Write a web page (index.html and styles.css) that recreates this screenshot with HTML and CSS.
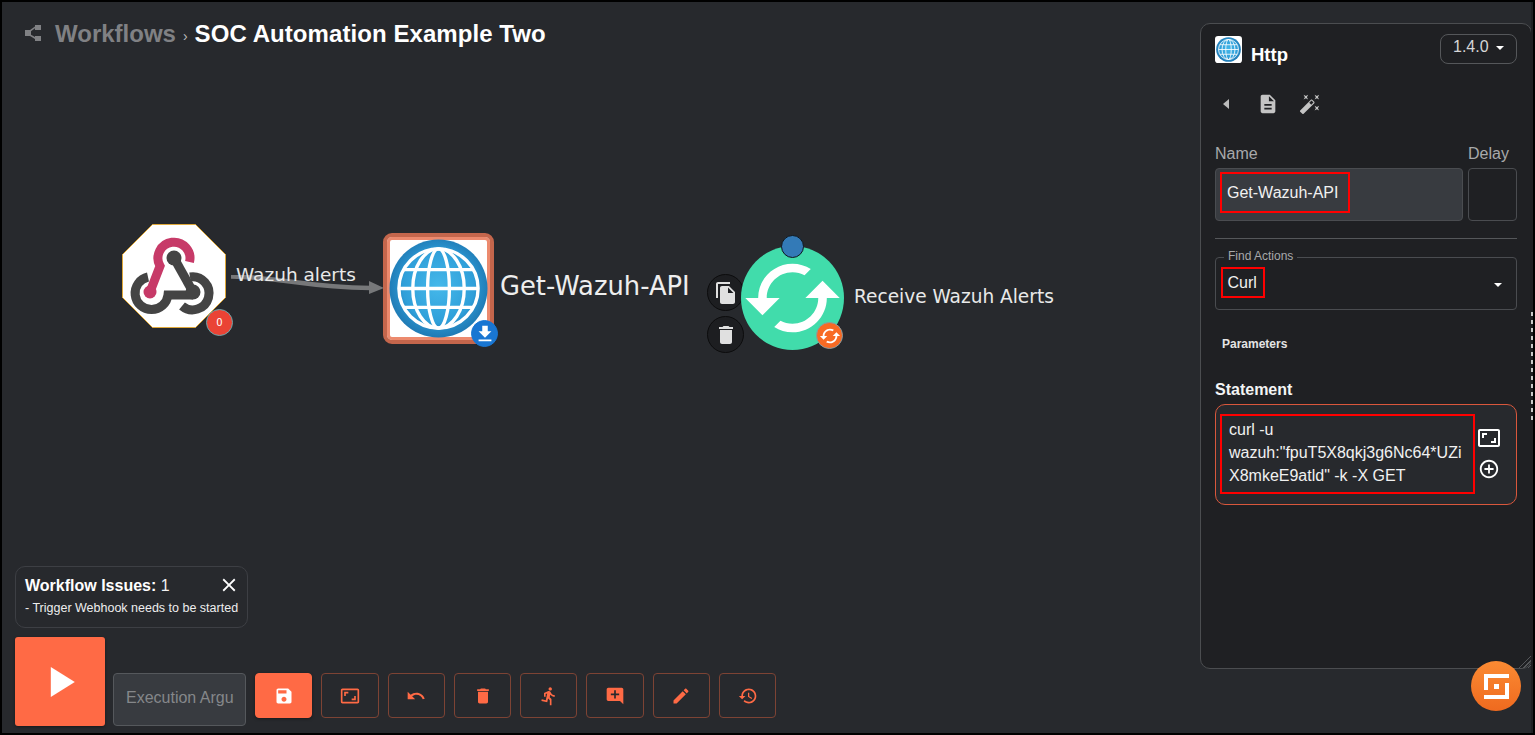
FILE: index.html
```html
<!DOCTYPE html>
<html lang="en">
<head>
<meta charset="utf-8">
<title>SOC Automation Example Two</title>
<link rel="stylesheet" href="styles.css">
</head>
<body>
<svg class="defs" width="0" height="0" aria-hidden="true">
  <defs>
    <radialGradient id="globeFill" cx="50%" cy="48%" r="52%">
      <stop offset="0" stop-color="#45b8ea"/>
      <stop offset="0.7" stop-color="#2f9fd9"/>
      <stop offset="0.82" stop-color="#268bc6"/>
      <stop offset="1" stop-color="#1f7ab4"/>
    </radialGradient>
    <symbol id="globe" viewBox="0 0 100 100">
      <circle cx="50" cy="50" r="49.5" fill="url(#globeFill)"/>
      <g fill="none" stroke="#fff" stroke-width="3.400">
        <circle cx="50" cy="50" r="40"/>
        <ellipse cx="50" cy="50" rx="11" ry="40"/>
        <ellipse cx="50" cy="50" rx="26" ry="40"/>
        <path d="M10 50H90M15 31H85M15 69H85"/>
      </g>
    </symbol>
  </defs>
</svg>
<main class="app">
  <header class="crumbs">
    <svg class="crumb-icon" viewBox="0 0 18 18"><path d="M11 1h6v5h-6V4.200L7 7.200V10.800L11 13V12h6v5h-6v-2l-5-3H1V6h5l5-3.500z" fill="#808184"/></svg>
    <span class="crumb-root">Workflows</span>
    <span class="crumb-sep">›</span>
    <span class="crumb-title">SOC Automation Example Two</span>
  </header>

  <section class="canvas">
    <svg class="edge" width="160" height="30" viewBox="0 0 160 30">
      <path d="M0 1.500C60 3 70 12 140 13" fill="none" stroke="#77787a" stroke-width="4.500"/>
      <path d="M138 6L153 13 138 19z" fill="#77787a"/>
    </svg>
    <span class="edge-label">Wazuh alerts</span>

    <div class="node-hook">
      <svg viewBox="0 0 104 104" width="104" height="104">
        <path d="M30.500 .5H73.500L103.500 30.500V73.500L73.500 103.500H30.500L.5 73.500V30.500z" fill="#fff" stroke="#e0a93a"/>
        <g fill="none" stroke-width="9">
          <path d="M26 53A16.500 16.500 0 1 0 46 71H71" stroke="#444"/>
          <path d="M68 53A16.500 16.500 0 1 1 60 82" stroke="#444"/>
          <path d="M52 34L71 68" stroke="#444"/>
          <path d="M67.500 38A16 16 0 1 0 38 42L28 68" stroke="#c73a68"/>
        </g>
        <circle cx="28" cy="68" r="6.500" fill="#c73a68"/>
        <circle cx="52" cy="34" r="7.500" fill="#444"/>
        <circle cx="71" cy="68" r="7.500" fill="#444"/>
      </svg>
      <span class="badge badge-red">0</span>
    </div>

    <div class="node-http">
      <svg class="http-globe" viewBox="0 0 100 100"><use href="#globe"/></svg>
      <span class="badge badge-blue">
        <svg viewBox="0 0 24 24" width="22" height="22"><path d="M19 9h-4V3H9v6H5l7 7 7-7zM5 18v2h14v-2H5z" fill="#fff"/></svg>
      </span>
    </div>
    <span class="label-http">Get-Wazuh-API</span>

    <button class="float-btn float-copy" type="button" aria-label="Copy">
      <svg viewBox="0 0 24 24" width="24" height="24"><path d="M16 1H4c-1.100 0-2 .9-2 2v14h2V3h12V1zm-1 4l6 6v10c0 1.100-.9 2-2 2H7.990C6.890 23 6 22.100 6 21l.01-14c0-1.100.89-2 1.990-2h7zm-1 7h5.500L14 6.500V12z" fill="#e0e0e0"/></svg>
    </button>
    <button class="float-btn float-del" type="button" aria-label="Delete">
      <svg viewBox="0 0 24 24" width="24" height="24"><path d="M6 19c0 1.100.9 2 2 2h8c1.100 0 2-.9 2-2V7H6v12zM19 4h-3.500l-1-1h-5l-1 1H5v2h14V4z" fill="#e0e0e0"/></svg>
    </button>

    <div class="node-trigger">
      <svg viewBox="0 0 24 24" width="106" height="106"><path d="M19 8l-4 4h3c0 3.310-2.690 6-6 6-1.010 0-1.970-.25-2.800-.7l-1.460 1.460C8.970 19.540 10.430 20 12 20c4.420 0 8-3.580 8-8h3l-4-4zM6 12c0-3.310 2.690-6 6-6 1.010 0 1.970.25 2.800.7l1.460-1.460C15.030 4.460 13.570 4 12 4c-4.420 0-8 3.580-8 8H1l4 4 4-4H6z" fill="#fff"/></svg>
      <span class="dot-top"></span>
      <span class="badge badge-orange">
        <svg viewBox="0 0 24 24" width="22" height="22"><path d="M19 8l-4 4h3c0 3.310-2.690 6-6 6-1.010 0-1.970-.25-2.800-.7l-1.460 1.460C8.970 19.540 10.430 20 12 20c4.420 0 8-3.580 8-8h3l-4-4zM6 12c0-3.310 2.690-6 6-6 1.010 0 1.970.25 2.800.7l1.460-1.460C15.030 4.460 13.570 4 12 4c-4.420 0-8 3.580-8 8H1l4 4 4-4H6z" fill="#fff"/></svg>
      </span>
    </div>
    <span class="label-trigger">Receive Wazuh Alerts</span>
  </section>

  <section class="dock">
    <div class="issues">
      <div class="issues-head">
        <span><strong>Workflow Issues:</strong> 1</span>
        <svg viewBox="0 0 24 24" width="22" height="22"><path d="M19 6.410L17.590 5 12 10.590 6.410 5 5 6.410 10.590 12 5 17.590 6.410 19 12 13.410 17.590 19 19 17.590 13.410 12z" fill="#fff"/></svg>
      </div>
      <div class="issues-text">- Trigger Webhook needs to be started</div>
    </div>
    <div class="toolbar">
      <button class="play" type="button" aria-label="Run">
        <svg viewBox="0 0 24 24" width="48" height="48"><path d="M7.400 4.500v15l12-7.500z" fill="#fff"/></svg>
      </button>
      <div class="exec">Execution Argu</div>
      <div class="tools">
        <button class="tool tool-solid" type="button" aria-label="Save"><svg viewBox="0 0 24 24"><path d="M17 3H5c-1.110 0-2 .9-2 2v14c0 1.100.89 2 2 2h14c1.100 0 2-.9 2-2V7l-4-4zm-5 16c-1.660 0-3-1.340-3-3s1.340-3 3-3 3 1.340 3 3-1.340 3-3 3zm3-10H5V5h10v4z"/></svg></button>
        <button class="tool" type="button" aria-label="Fit"><svg viewBox="0 0 24 24"><path d="M19 12h-2v3h-3v2h5v-5zM7 9h3V7H5v5h2V9zm14-6H3c-1.100 0-2 .9-2 2v14c0 1.100.9 2 2 2h18c1.100 0 2-.9 2-2V5c0-1.100-.9-2-2-2zm0 16.010H3V4.990h18v14.020z"/></svg></button>
        <button class="tool" type="button" aria-label="Undo"><svg viewBox="0 0 24 24"><path d="M12.500 8c-2.650 0-5.050.99-6.900 2.600L2 7v9h9l-3.620-3.620c1.390-1.160 3.160-1.880 5.120-1.880 3.540 0 6.550 2.310 7.600 5.500l2.370-.78C21.080 11.030 17.150 8 12.500 8z"/></svg></button>
        <button class="tool" type="button" aria-label="Delete"><svg viewBox="0 0 24 24"><path d="M6 19c0 1.100.9 2 2 2h8c1.100 0 2-.9 2-2V7H6v12zM19 4h-3.500l-1-1h-5l-1 1H5v2h14V4z"/></svg></button>
        <button class="tool" type="button" aria-label="Run"><svg viewBox="0 0 24 24"><path d="M13.490 5.480c1.100 0 2-.9 2-2s-.9-2-2-2-2 .9-2 2 .9 2 2 2zm-3.600 13.900l1-4.400 2.100 2v6h2v-7.500l-2.100-2 .6-3c1.300 1.500 3.300 2.500 5.500 2.500v-2c-1.900 0-3.500-1-4.300-2.400l-1-1.600c-.4-.6-1-1-1.700-1-.3 0-.5.1-.8.1l-5.200 2.200v4.700h2v-3.400l1.800-.7-1.600 8.100-4.900-1-.4 2 7 1.400z"/></svg></button>
        <button class="tool" type="button" aria-label="Add comment"><svg viewBox="0 0 24 24"><path d="M21.990 4c0-1.100-.89-2-1.990-2H4c-1.100 0-2 .9-2 2v12c0 1.100.9 2 2 2h14l4 4-.01-18zM17 11h-4v4h-2v-4H7V9h4V5h2v4h4v2z"/></svg></button>
        <button class="tool" type="button" aria-label="Edit"><svg viewBox="0 0 24 24"><path d="M3 17.250V21h3.750L17.810 9.940l-3.750-3.750L3 17.250zM20.710 7.040c.39-.39.39-1.020 0-1.410l-2.340-2.340c-.39-.39-1.020-.39-1.410 0l-1.830 1.830 3.750 3.750 1.830-1.830z"/></svg></button>
        <button class="tool" type="button" aria-label="History"><svg viewBox="0 0 24 24"><path d="M13 3c-4.970 0-9 4.030-9 9H1l3.890 3.890.07.14L9 12H6c0-3.870 3.130-7 7-7s7 3.130 7 7-3.130 7-7 7c-1.930 0-3.680-.79-4.940-2.060l-1.420 1.420C8.270 19.990 10.510 21 13 21c4.970 0 9-4.030 9-9s-4.030-9-9-9zm-1 5v5l4.280 2.540.72-1.210-3.500-2.080V8H12z"/></svg></button>
      </div>
    </div>
  </section>

  <aside class="panel">
    <div class="panel-head">
      <div class="app-title">
        <svg class="app-icon" viewBox="0 0 26 26"><rect width="26" height="26" rx="3" fill="#fff"/><svg x="1" y="1" width="24" height="24" viewBox="0 0 100 100"><use href="#globe"/></svg></svg>
        <span>Http</span>
      </div>
      <div class="version">1.4.0 <span class="caret"></span></div>
    </div>
    <div class="panel-icons">
      <svg class="pi-back" viewBox="0 0 6 10" width="6" height="10"><path d="M6 0v10L0 5z" fill="#bbb"/></svg>
      <svg viewBox="0 0 24 24" width="22" height="22"><path d="M14 2H6c-1.100 0-1.990.9-1.990 2L4 20c0 1.100.89 2 1.990 2H18c1.100 0 2-.9 2-2V8l-6-6zm2 16H8v-2h8v2zm0-4H8v-2h8v2zm-3-5V3.500L18.500 9H13z" fill="#c4c4c4"/></svg>
      <svg viewBox="0 0 24 24" width="22" height="22"><path d="M7.500 5.600L10 7 8.600 4.500 10 2 7.500 3.400 5 2l1.400 2.500L5 7zm12 9.800L17 14l1.400 2.500L17 19l2.500-1.400L22 19l-1.400-2.500L22 14zM22 2l-2.500 1.400L17 2l1.400 2.500L17 7l2.500-1.400L22 7l-1.400-2.500zm-7.630 5.290c-.39-.39-1.020-.39-1.410 0L1.290 18.960c-.39.39-.39 1.020 0 1.410l2.340 2.340c.39.39 1.020.39 1.410 0L16.700 11.050c.39-.39.39-1.020 0-1.410l-2.330-2.350zm-1.030 5.490l-2.120-2.120 2.440-2.440 2.120 2.120-2.440 2.440z" fill="#c4c4c4"/></svg>
    </div>
    <div class="fields">
      <div class="field-name">
        <label class="label">Name</label>
        <div class="input-name"><span class="mark mark-name">Get-Wazuh-API</span></div>
      </div>
      <div class="field-delay">
        <label class="label">Delay</label>
        <div class="input-delay"></div>
      </div>
    </div>
    <hr class="rule">
    <div class="find">
      <span class="find-legend">Find Actions</span>
      <span class="mark mark-curl">Curl</span>
      <span class="caret find-caret"></span>
    </div>
    <div class="params">Parameters</div>
    <div class="statement-label">Statement</div>
    <div class="statement">
      <div class="mark-statement">curl -u wazuh:"fpuT5X8qkj3g6Nc64*UZiX8mkeE9atld" -k -X GET</div>
      <div class="statement-icons">
        <svg viewBox="0 0 24 24" width="24" height="24"><path d="M19 12h-2v3h-3v2h5v-5zM7 9h3V7H5v5h2V9zm14-6H3c-1.100 0-2 .9-2 2v14c0 1.100.9 2 2 2h18c1.100 0 2-.9 2-2V5c0-1.100-.9-2-2-2zm0 16.010H3V4.990h18v14.020z" fill="#fff"/></svg>
        <svg viewBox="0 0 24 24" width="22" height="22"><path d="M13 7h-2v4H7v2h4v4h2v-4h4v-2h-4V7zm-1-5C6.480 2 2 6.480 2 12s4.480 10 10 10 10-4.480 10-10S17.520 2 12 2zm0 18c-4.410 0-8-3.590-8-8s3.590-8 8-8 8 3.590 8 8-3.590 8-8 8z" fill="#fff"/></svg>
      </div>
    </div>
    <span class="grip"></span>
  </aside>

  <div class="help">
    <svg viewBox="0 0 25 25" width="25" height="25"><path d="M0 0H25V4H4V16H0zM25 25H0V21H21V9H25zM10 10H15V15H10z" fill="#fff"/></svg>
  </div>
  <span class="edge-strip"></span>
</main>
</body>
</html>
```
FILE: styles.css
```css
* { box-sizing: border-box; }
html, body { margin: 0; height: 100%; overflow: hidden; background: #000; }
body { padding: 2px; font-family: "Liberation Sans", Arial, sans-serif; color: #fff; }
.defs { position: absolute; }
button { font: inherit; padding: 0; cursor: pointer; }

.app {
  position: relative;
  width: 1531px;
  height: 731px;
  background: #27292d;
  overflow: hidden;
}
.edge-strip {
  position: absolute;
  right: 0;
  top: 0;
  bottom: 0;
  width: 2px;
  background: #1f2023;
}
.edge-strip::after {
  content: "";
  position: absolute;
  left: 0;
  top: 310px;
  width: 2px;
  height: 110px;
  background: repeating-linear-gradient(#c9c9c9 0 4px, transparent 4px 8px);
}

/* breadcrumb */
.crumbs {
  position: absolute;
  left: 22px;
  top: 18px;
  display: flex;
  align-items: center;
  height: 28px;
  font-size: 24px;
  font-weight: 700;
  white-space: nowrap;
}
.crumb-icon { width: 18px; height: 18px; margin-right: 13px; margin-top: -3px; }
.crumb-root { color: #808184; }
.crumb-sep { font-size: 14px; font-weight: 400; color: #bbb; margin: 3px 7px 0; }
.crumb-title { color: #fff; letter-spacing: .07px; }

/* free canvas */
.canvas { position: absolute; inset: 0; font-family: "DejaVu Sans", sans-serif; }
.edge { position: absolute; left: 229px; top: 273px; }
.edge-label { position: absolute; left: 234px; top: 261px; font-size: 18.500px; line-height: 24px; color: #e9e9e9; white-space: nowrap; }
.node-hook { position: absolute; left: 120px; top: 222px; width: 104px; height: 104px; }
.node-hook > svg { display: block; }
.badge {
  position: absolute;
  width: 27px;
  height: 27px;
  border-radius: 50%;
  display: flex;
  align-items: center;
  justify-content: center;
  border: 1px solid #6aa6ab;
}
.badge-red { left: 84px; top: 85px; background: #ea4335; font-size: 10px; color: #fff; }
.badge-blue { left: 84px; top: 83px; background: #1976d2; border-color: #1976d2; }
.badge-orange { left: 75px; top: 76px; background: #f86a24; border-color: #8a9ca0; }
.node-http {
  position: absolute;
  left: 381px;
  top: 231px;
  width: 111px;
  height: 111px;
  border: 4px solid #c4664c;
  border-radius: 9px;
  background: #fff;
  box-shadow: inset 0 0 0 3px #ec8a6e;
}
.http-globe { position: absolute; left: 2px; top: 2px; width: 99px; height: 99px; }
.label-http { position: absolute; left: 498px; top: 269px; font-size: 25.800px; line-height: 30px; color: #eee; white-space: nowrap; }
.float-btn {
  position: absolute;
  left: 705px;
  width: 37px;
  height: 37px;
  border-radius: 50%;
  border: 1px solid #0c0c0d;
  background: #1d1e21;
  display: flex;
  align-items: center;
  justify-content: center;
}
.float-copy { top: 272px; }
.float-del { top: 314px; }
.node-trigger {
  position: absolute;
  left: 739px;
  top: 244px;
  width: 103px;
  height: 104px;
  border-radius: 50%;
  background: #41dcab;
  display: flex;
  align-items: center;
  justify-content: center;
}
.dot-top {
  position: absolute;
  left: 40px;
  top: -11px;
  width: 23px;
  height: 23px;
  border-radius: 50%;
  background: #337ab7;
  border: 1px solid #10171d;
}
.label-trigger { position: absolute; left: 852px; top: 283px; font-size: 18.550px; line-height: 24px; color: #e9e9e9; white-space: nowrap; }

/* bottom dock */
.dock { position: absolute; left: 13px; top: 564px; display: flex; flex-direction: column; gap: 9px; }
.issues {
  width: 233px;
  height: 62px;
  padding: 10px 7px 0 9px;
  border: 1px solid #3d3f44;
  border-radius: 10px;
}
.issues-head { display: flex; justify-content: space-between; align-items: center; height: 18px; font-size: 16px; line-height: 18px; color: #f2f2f2; }
.issues-head svg { margin-top: -2px; }
.issues-head strong { color: #fff; }
.issues-text { margin-top: 6px; font-size: 12.500px; line-height: 15px; color: #eee; white-space: nowrap; }
.toolbar { display: flex; align-items: flex-end; width: 770px; }
.play {
  width: 90px;
  height: 89px;
  border: 0;
  border-radius: 3px;
  background: #ff6a45;
  display: flex;
  align-items: center;
  justify-content: center;
  box-shadow: 0 1px 3px rgba(0,0,0,.4);
}
.exec {
  width: 133px;
  height: 53px;
  margin-left: 8px;
  padding: 0 12px;
  line-height: 47px;
  font-size: 16px;
  color: #85878a;
  background: #383b40;
  border: 1px solid #55585c;
  border-radius: 4px;
  overflow: hidden;
  white-space: nowrap;
}
.tools { display: flex; gap: 9px; margin-left: 9px; margin-bottom: 8px; }
.tool {
  width: 57.300px;
  height: 45px;
  background: transparent;
  border: 1px solid #7d4334;
  border-radius: 4px;
  display: flex;
  align-items: center;
  justify-content: center;
}
.tool svg { width: 20px; height: 20px; fill: #ff6a45; }
.tool-solid { background: #ff6a45; border-color: #ff6a45; box-shadow: 0 1px 3px rgba(0,0,0,.4); }
.tool-solid svg { fill: #fff; }

/* side panel */
.panel {
  position: absolute;
  left: 1198px;
  top: 21px;
  width: 332px;
  height: 646px;
  padding: 11px 14px 0;
  background: #1f2023;
  border: 1px solid #4b4d50;
  border-radius: 10px;
}
.panel-head { display: flex; justify-content: space-between; align-items: flex-start; }
.app-title { display: flex; align-items: flex-start; gap: 9px; font-size: 18.500px; font-weight: 700; line-height: 24px; }
.app-title span { margin-top: 8px; }
.app-icon { width: 27px; height: 27px; margin-top: 1px; }
.version {
  width: 77px;
  height: 30px;
  margin-top: -1px;
  padding-left: 12px;
  font-size: 16px;
  line-height: 24px;
  color: #d6d6d6;
  border: 1px solid #55575a;
  border-radius: 8px;
}
.caret {
  display: inline-block;
  width: 0;
  height: 0;
  margin-left: 3px;
  vertical-align: 2px;
  border-left: 4.500px solid transparent;
  border-right: 4.500px solid transparent;
  border-top: 4.500px solid #fff;
}
.panel-icons { display: flex; align-items: center; height: 24px; margin-top: 25px; padding-left: 8px; }
.panel-icons svg:nth-child(2) { margin-left: 28px; }
.panel-icons svg:nth-child(3) { margin-left: 20px; }
.fields { display: flex; gap: 5px; margin-top: 28px; }
.field-name { width: 248px; }
.field-delay { width: 49px; }
.label { display: block; font-size: 16px; line-height: 20px; color: #a8a9ab; height: 24px; }
.input-name, .input-delay { height: 53px; border: 1px solid #4a4c50; border-radius: 4px; }
.input-name { background: #383b40; padding: 3px 0 0 4px; }
.mark { display: block; border: 2px solid #f00; color: #f1f1f1; font-size: 16px; white-space: nowrap; }
.mark-name { width: 130px; height: 41px; padding-left: 5px; line-height: 37px; }
.rule { height: 1px; margin: 17px 0 0; border: 0; background: #55575a; }
.find {
  position: relative;
  height: 53px;
  margin-top: 18px;
  padding: 9px 0 0 5px;
  border: 1px solid #4a4c50;
  border-radius: 4px;
}
.find-legend {
  position: absolute;
  left: 8px;
  top: -9px;
  padding: 0 4px;
  font-size: 12px;
  line-height: 15px;
  color: #a8a9ab;
  background: #1f2023;
}
.mark-curl { width: 44px; height: 31px; padding-left: 4.500px; line-height: 27px; }
.find-caret { position: absolute; right: 14px; top: 25px; margin: 0; }
.params { margin: 27px 0 0 7px; font-size: 12px; line-height: 15px; font-weight: 700; color: #e4e4e4; }
.statement-label { margin-top: 28px; font-size: 16px; line-height: 20px; font-weight: 700; color: #f4f4f4; }
.statement {
  display: flex;
  height: 101px;
  margin-top: 4px;
  padding: 9px 0 0 4px;
  background: #27292d;
  border: 1px solid #d9573c;
  border-radius: 10px;
}
.mark-statement {
  flex: none;
  width: 255px;
  height: 80px;
  padding: 2px 6px 0 7px;
  border: 2px solid #f00;
  font-size: 16px;
  line-height: 23px;
  color: #f1f1f1;
  overflow-wrap: anywhere;
}
.statement-icons { display: flex; flex-direction: column; align-items: center; gap: 8px; width: 28px; margin-top: 12px; }
.grip {
  position: absolute;
  right: 0;
  bottom: 0;
  width: 14px;
  height: 14px;
  background: repeating-linear-gradient(135deg, transparent 0 2px, #55575a 2px 3px);
  clip-path: polygon(100% 0, 100% 100%, 0 100%);
}
.help {
  position: absolute;
  left: 1469px;
  top: 659px;
  width: 50px;
  height: 50px;
  border-radius: 50%;
  background: linear-gradient(#fb8b33, #ef6a1f);
  display: flex;
  align-items: center;
  justify-content: center;
  z-index: 2;
}
```
